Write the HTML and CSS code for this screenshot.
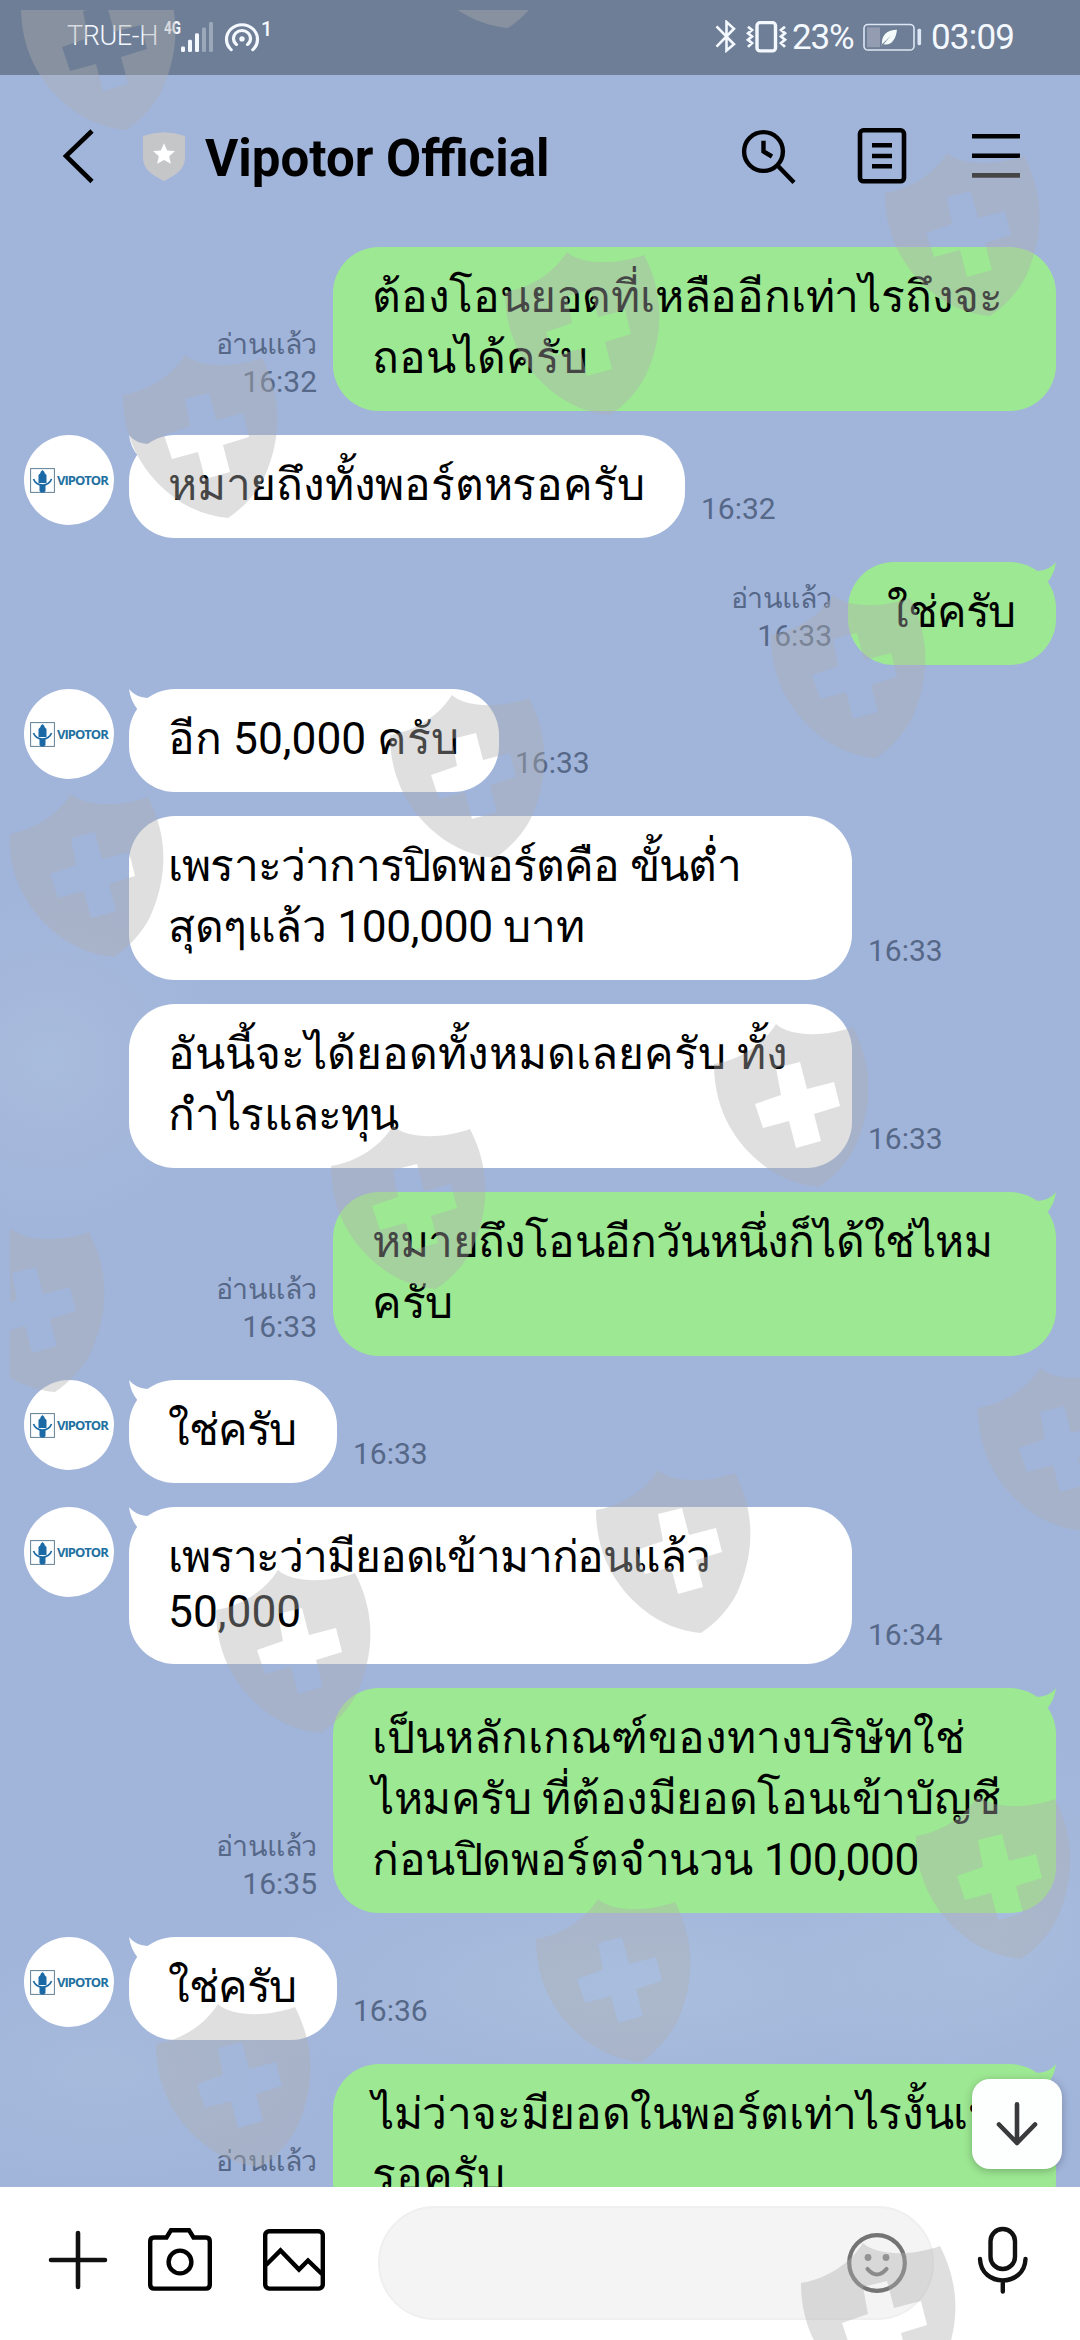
FILE: index.html
```html
<!DOCTYPE html>
<html lang="th">
<head>
<meta charset="utf-8">
<title>Vipotor Official</title>
<link rel="stylesheet" href="styles.css">
</head>
<body>
<svg class="defs" width="0" height="0">
  <defs>
    <symbol id="tail" viewBox="0 0 32 32"><path d="M0 0C4 5 11 9 20 9L32 32L9 21C4 15 1 8 0 0Z"/></symbol>
    <symbol id="logo" viewBox="0 0 25 25">
      <rect x=".6" y=".6" width="23.8" height="23.8" fill="#fff" stroke="#5f7f95" stroke-width="1"/>
      <path fill="#1b6aa5" d="M8.500 15V7l2-2v-1l2-2 2 2v1l2 2v8zM9.500 17h6v6l-1.500 1.500h-3L9.500 23z"/>
      <path fill="none" stroke="#1b6aa5" stroke-width="1.700" d="M3.500 11C5 15 8 17 12.500 17S20 15 21.500 11"/>
    </symbol>
    <path id="shield" fill-rule="evenodd" d="M-22-81C-8-68 28-68 55-78C72-45 78-5 57 42C49 58 36 72 21 82C0 80-20 72-36 59C-60 40-84 8-84-41C-64-44-38-56-22-81ZM-22-37L2-43L9-16L36-23L42 1L16 9L23 36L-2 43L-9 16L-35 23L-43-1L-17-10Z"/>
  </defs>
</svg>
<div class="screen">
  <div class="status">
    <span class="carrier">TRUE-H</span>
    <span class="net">4G</span>
    <svg class="bars" width="34" height="32" viewBox="0 0 34 34" preserveAspectRatio="none">
      <g fill="#f4f8ff"><rect x="1" y="27" width="4" height="6" rx="1.500"/><rect x="8" y="20" width="4" height="13" rx="1.500"/><rect x="15" y="13" width="4" height="20" rx="1.500"/></g>
      <g fill="#9ba8ba"><rect x="22" y="7" width="4" height="26" rx="1.500"/><rect x="29" y="1" width="4" height="32" rx="1.500"/></g>
    </svg>
    <svg class="hotspot" width="36" height="32" viewBox="0 0 36 34" preserveAspectRatio="none" fill="none" stroke="#f4f8ff" stroke-width="3.200" stroke-linecap="round">
      <path d="M7.200 30.500A15.500 15.500 0 1 1 28.800 30.500M12.500 25A8.500 8.500 0 1 1 23.500 25"/><circle cx="18" cy="19" r="2.700" fill="#f4f8ff" stroke="none"/>
    </svg>
    <span class="count">1</span>
    <span class="grow"></span>
    <svg class="bt" width="22" height="33" viewBox="0 0 22 34" preserveAspectRatio="none" fill="none" stroke="#f4f8ff" stroke-width="2.600"><path d="M1.500 6.500L19 25L11.500 31.500V2L19 9L1.500 27.500"/></svg>
    <svg class="vibe" width="42" height="32" viewBox="0 0 42 34" preserveAspectRatio="none" fill="none" stroke="#f4f8ff" stroke-width="2.800"><rect x="11" y="1.800" width="18.500" height="30" rx="3" stroke-width="3.400"/><path d="M2 6l4 3.500-4 3.500 4 3.500-4 3.500 4 3.500-4 4M39 6l-4 3.500 4 3.500-4 3.500 4 3.500-4 3.500 4 4"/></svg>
    <span class="pct">23%</span>
    <svg class="batt" width="60" height="29" viewBox="0 0 60 30" preserveAspectRatio="none"><rect x="1" y="1.500" width="50" height="26.500" rx="4" fill="none" stroke="#dde6f5" stroke-width="1.600"/><rect x="4" y="4.500" width="13" height="20.500" fill="#939cb0"/><path d="M19 23C18 13 24 7 34 7C33 17 28 24 20.500 22L28 13L18 23Z" fill="#f4fbfa"/><rect x="54.500" y="6" width="3.600" height="17" rx="1.500" fill="#dde6f5"/></svg>
    <span class="clock">03:09</span>
  </div>

  <div class="header">
    <svg class="back" width="36" height="60" viewBox="0 0 36 60"><path d="M31 6L5 31L31 56.500" fill="none" stroke="#000" stroke-width="4.600"/></svg>
    <svg class="badge" width="42" height="49" viewBox="0 0 42 50" preserveAspectRatio="none"><path d="M0 4Q21-3.500 42 4V26C42 38 33 44 21 50C9 44 0 38 0 26Z" fill="#c5c6c8"/><path d="M21 11.500L24.200 18.800L32 19.500L26.200 24.800L27.800 32.500L21 28.600L14.200 32.500L15.800 24.800L10 19.500L17.800 18.800Z" fill="#fff"/></svg>
    <h1 class="title">Vipotor Official</h1>
    <span class="grow"></span>
    <svg width="56" height="60" viewBox="0 0 56 60" fill="none" stroke="#000" stroke-width="4.400"><circle cx="23.500" cy="26.500" r="19.400"/><path d="M38 41L54 57.500M23.500 15.700V26.500L32 31.500"/></svg>
    <svg class="note" width="50" height="60" viewBox="0 0 50 60" fill="none" stroke="#000" stroke-width="4.600"><rect x="3" y="5.300" width="44" height="51" rx="3.500"/><path d="M15 20.300H35M15 31H35M15 41.300H35"/></svg>
    <svg class="menu" width="48" height="60" viewBox="0 0 48 60" fill="none" stroke="#000" stroke-width="4.600"><path d="M0 11.300H48M0 30.800H48M0 50.400H48"/></svg>
  </div>

  <div class="chat">
    <div class="row out"><div class="meta"><span class="read">อ่านแล้ว</span><span>16:32</span></div><div class="bubble wide"><p class="t1">ต้องโอนยอดที่เหลืออีกเท่าไรถึงจะ</p><p class="t1">ถอนได้ครับ</p></div></div>
    <div class="row in"><div class="avatar"><svg width="25" height="25"><use href="#logo"/></svg><b>VIPOTOR</b></div><div class="bubble w556"><svg class="tail"><use href="#tail"/></svg><p class="t1">หมายถึงทั้งพอร์ตหรอครับ</p></div><div class="meta"><span>16:32</span></div></div>
    <div class="row out"><div class="meta"><span class="read">อ่านแล้ว</span><span>16:33</span></div><div class="bubble w208"><svg class="tail"><use href="#tail"/></svg><p class="t4">ใช่ครับ</p></div></div>
    <div class="row in"><div class="avatar"><svg width="25" height="25"><use href="#logo"/></svg><b>VIPOTOR</b></div><div class="bubble w370"><svg class="tail"><use href="#tail"/></svg><p>อีก 50,000 ครับ</p></div><div class="meta"><span>16:33</span></div></div>
    <div class="row in next"><div class="bubble wide"><p class="t3">เพราะว่าการปิดพอร์ตคือ ขั้นต่ำ</p><p class="t2">สุดๆแล้ว 100,000 บาท</p></div><div class="meta"><span>16:33</span></div></div>
    <div class="row in next"><div class="bubble wide"><p>อันนี้จะได้ยอดทั้งหมดเลยครับ ทั้ง</p><p class="t3">กำไรและทุน</p></div><div class="meta"><span>16:33</span></div></div>
    <div class="row out"><div class="meta"><span class="read">อ่านแล้ว</span><span>16:33</span></div><div class="bubble wide"><svg class="tail"><use href="#tail"/></svg><p class="t3">หมายถึงโอนอีกวันหนึ่งก็ได้ใช่ไหม</p><p class="t2">ครับ</p></div></div>
    <div class="row in"><div class="avatar"><svg width="25" height="25"><use href="#logo"/></svg><b>VIPOTOR</b></div><div class="bubble w208"><svg class="tail"><use href="#tail"/></svg><p class="t4">ใช่ครับ</p></div><div class="meta"><span>16:33</span></div></div>
    <div class="row in"><div class="avatar"><svg width="25" height="25"><use href="#logo"/></svg><b>VIPOTOR</b></div><div class="bubble wide"><svg class="tail"><use href="#tail"/></svg><p class="t4">เพราะว่ามียอดเข้ามาก่อนแล้ว</p><p class="latin">50,000</p></div><div class="meta"><span>16:34</span></div></div>
    <div class="row out"><div class="meta"><span class="read">อ่านแล้ว</span><span>16:35</span></div><div class="bubble wide"><svg class="tail"><use href="#tail"/></svg><p>เป็นหลักเกณฑ์ของทางบริษัทใช่</p><p class="t2">ไหมครับ ที่ต้องมียอดโอนเข้าบัญชี</p><p class="t2">ก่อนปิดพอร์ตจำนวน 100,000</p></div></div>
    <div class="row in"><div class="avatar"><svg width="25" height="25"><use href="#logo"/></svg><b>VIPOTOR</b></div><div class="bubble w208"><svg class="tail"><use href="#tail"/></svg><p class="t4">ใช่ครับ</p></div><div class="meta"><span>16:36</span></div></div>
    <div class="row out"><div class="meta"><span class="read">อ่านแล้ว</span><span>16:36</span></div><div class="bubble wide"><svg class="tail"><use href="#tail"/></svg><p class="t2">ไม่ว่าจะมียอดในพอร์ตเท่าไรงั้นเห</p><p>รอครับ</p></div></div>
    <div class="jump"><svg width="44" height="48" viewBox="0 0 44 48" fill="none" stroke="#3a3a3c" stroke-width="4.600" stroke-linecap="round" stroke-linejoin="round"><path d="M22 4.300V43M4 24.500L22 43L40 24.500"/></svg></div>
  </div>

  <div class="composer">
    <svg class="plus" width="60" height="66" viewBox="0 0 60 66" fill="none" stroke="#111" stroke-width="4.600" stroke-linecap="round"><path d="M30 6V60M3 33H57"/></svg>
    <svg class="camera" width="64" height="66" viewBox="0 0 64 66" fill="none" stroke="#000" stroke-width="4.400"><path d="M6 10.500H18.500L23 3.200H41L45.500 10.500H58Q61.800 10.500 61.800 14.500V57.600Q61.800 61.600 58 61.600H6Q2.200 61.600 2.200 57.600V14.500Q2.200 10.500 6 10.500Z"/><circle cx="32" cy="35" r="11.400"/></svg>
    <svg class="photo" width="62" height="66" viewBox="0 0 62 66" fill="none" stroke="#000" stroke-width="4.400"><rect x="2.200" y="4.200" width="57.600" height="57.400" rx="4"/><path d="M3 38L17.500 23.500L36 42.500L45 33.500L59 47"/></svg>
    <div class="field"><svg width="60" height="60" viewBox="0 0 60 60" fill="none" stroke="#747474" stroke-width="4.200"><circle cx="30" cy="30" r="27.800"/><path d="M20.500 36Q30 47 39.500 36" stroke-linecap="round"/><g fill="#808080" stroke="none"><circle cx="21" cy="24.500" r="3.400"/><circle cx="39" cy="24.500" r="3.400"/></g></svg></div>
    <svg class="mic" width="52" height="70" viewBox="0 0 52 70" fill="none" stroke="#111" stroke-width="4.400" stroke-linecap="round"><rect x="13.500" y="4" width="24.500" height="40" rx="12.200"/><path d="M3 34C4 62.500 47.500 62.500 48.500 34M25.800 56V66.500"/></svg>
  </div>

  <svg class="shields" width="1080" height="2340" viewBox="0 0 1080 2340">
    <clipPath id="area"><rect x="10" y="10" width="1070" height="2330"/></clipPath>
    <g clip-path="url(#area)" fill="#afafaf" fill-opacity=".4">
      <use href="#shield" x="105" y="48"/><use href="#shield" x="487" y="-54"/><use href="#shield" x="969" y="234"/>
      <use href="#shield" x="589" y="333"/><use href="#shield" x="207" y="436"/><use href="#shield" x="855" y="676"/>
      <use href="#shield" x="474" y="776"/><use href="#shield" x="93" y="875"/><use href="#shield" x="798" y="1105"/>
      <use href="#shield" x="415" y="1207"/><use href="#shield" x="34" y="1310"/><use href="#shield" x="680" y="1551"/>
      <use href="#shield" x="300" y="1651"/><use href="#shield" x="1062" y="1449"/><use href="#shield" x="1000" y="1877"/>
      <use href="#shield" x="620" y="1980"/><use href="#shield" x="240" y="2085"/><use href="#shield" x="885" y="2324"/>
    </g>
  </svg>
</div>
</body>
</html>
```
FILE: styles.css
```css
* { box-sizing: border-box; }
body { margin: 0; }
p, h1 { margin: 0; }
svg { display: block; flex: none; }
.defs { position: absolute; }
.grow { flex: 1; }

.screen {
  position: relative;
  width: 1080px;
  height: 2340px;
  overflow: hidden;
  display: flex;
  flex-direction: column;
  font-family: Roboto, sans-serif;
  background:
    radial-gradient(ellipse 170px 170px at 50px 1060px, rgba(180, 200, 226, .4), transparent),
    radial-gradient(ellipse 420px 130px at 640px 1985px, rgba(178, 200, 226, .5), transparent),
    radial-gradient(ellipse 220px 200px at 1000px 1930px, rgba(178, 200, 226, .4), transparent),
    radial-gradient(ellipse 260px 120px at 100px 2070px, rgba(174, 196, 224, .4), transparent),
    #a1b4da;
}

.status {
  height: 75px;
  flex: none;
  display: flex;
  align-items: flex-start;
  padding: 0 67px;
  background: #6e7e96;
  color: #f4f8ff;
  white-space: nowrap;
}
.carrier { font-size: 27px; font-weight: 300; line-height: 32px; margin-top: 20px; width: 97px; letter-spacing: -.4px; }
.net { font-size: 18px; font-weight: 700; line-height: 20px; margin-top: 18px; width: 16px; transform: scaleX(.75); transform-origin: left; }
.bars { margin-top: 21px; }
.hotspot { margin: 21px 0 0 10px; }
.count { font-size: 20px; line-height: 20px; margin: 19px 0 0 1px; font-weight: 500; }
.bt { margin: 20px 9px 0 0; }
.vibe { margin: 21px 4px 0 0; }
.pct, .clock { font-size: 35px; line-height: 40px; margin-top: 18px; }
.pct { width: 71px; letter-spacing: -1.200px; }
.batt { margin-top: 23px; }
.clock { width: 82px; margin-left: 8px; letter-spacing: -.8px; }

.header {
  height: 172px;
  flex: none;
  display: flex;
  align-items: flex-start;
  padding: 50px 60px 0 61px;
}
.header .badge { margin: 7px 20px 0 46px; }
.title { margin-top: 4px; font-size: 51px; line-height: 60px; font-weight: 700; white-space: nowrap; }
.header .note { margin-left: 61px; }
.header .menu { margin-left: 65px; }

.chat {
  position: relative;
  height: 1940px;
  flex: none;
  overflow: hidden;
  display: flex;
  flex-direction: column;
  gap: 24px;
  padding: 0 24px;
}
.row { display: flex; flex: none; }
.out { justify-content: flex-end; gap: 16px; }
.in { gap: 15px; }
.next { padding-left: 105px; }
.bubble {
  position: relative;
  padding: 20px 0 22px 39px;
  border-radius: 46px;
  background: #fff;
  color: #000;
  font-size: 44.300px;
  line-height: 61px;
  white-space: nowrap;
}
.bubble p { height: 61px; }
.bubble .latin { height: 54px; line-height: 49px; }
/* tracking steps, from loose to tight */
.t1 { letter-spacing: -.2px; }
.t2 { letter-spacing: -.38px; }
.t3 { letter-spacing: -.8px; }
.t4 { letter-spacing: -1.150px; }
.out .bubble { background: #9de893; }
.wide { width: 723px; }
.w556 { width: 556px; }
.w370 { width: 370px; }
.w208 { width: 208px; }
.tail { position: absolute; left: 0; top: 0; width: 32px; height: 32px; fill: #fff; }
.out .tail { left: auto; right: 0; fill: #9de893; transform: scaleX(-1); }
.meta {
  display: flex;
  flex-direction: column;
  justify-content: flex-end;
  padding-bottom: 11px;
  color: #566888;
  font-size: 30px;
  line-height: 37px;
}
.read { font-size: 28.500px; letter-spacing: -.3px; }
.out .meta { align-items: flex-end; }
.in .meta { margin-left: 1px; }
.avatar {
  width: 90px;
  height: 90px;
  border-radius: 45px;
  background: #fff;
  display: flex;
  align-items: center;
  padding-left: 6px;
  gap: 2px;
  color: #22709f;
  font: 13px/20px "Open Sans", sans-serif;
  letter-spacing: -1px;
}
.avatar b { font-weight: 700; }
.jump {
  position: absolute;
  left: 972px;
  top: 1832px;
  width: 90px;
  height: 90px;
  border-radius: 18px;
  background: #fdfefe;
  box-shadow: 0 2px 8px rgba(0, 0, 0, .25);
  display: flex;
  align-items: center;
  justify-content: center;
}

.composer {
  height: 153px;
  flex: none;
  background: #fff;
  display: flex;
  align-items: flex-start;
  padding: 19px 51px 0 48px;
}
.composer .plus { margin-top: 21px; }
.composer .camera { margin: 21px 0 0 40px; }
.composer .photo { margin: 21px 0 0 51px; }
.composer .field {
  width: 558px;
  height: 114px;
  margin-left: 53px;
  border: 2px solid #efefef;
  border-radius: 57px;
  background: #f4f4f4;
  display: flex;
  align-items: center;
  justify-content: flex-end;
  padding-right: 25px;
}
.composer .mic { margin: 19px 0 0 43px; }

.shields { position: absolute; left: 0; top: 0; pointer-events: none; }
```
